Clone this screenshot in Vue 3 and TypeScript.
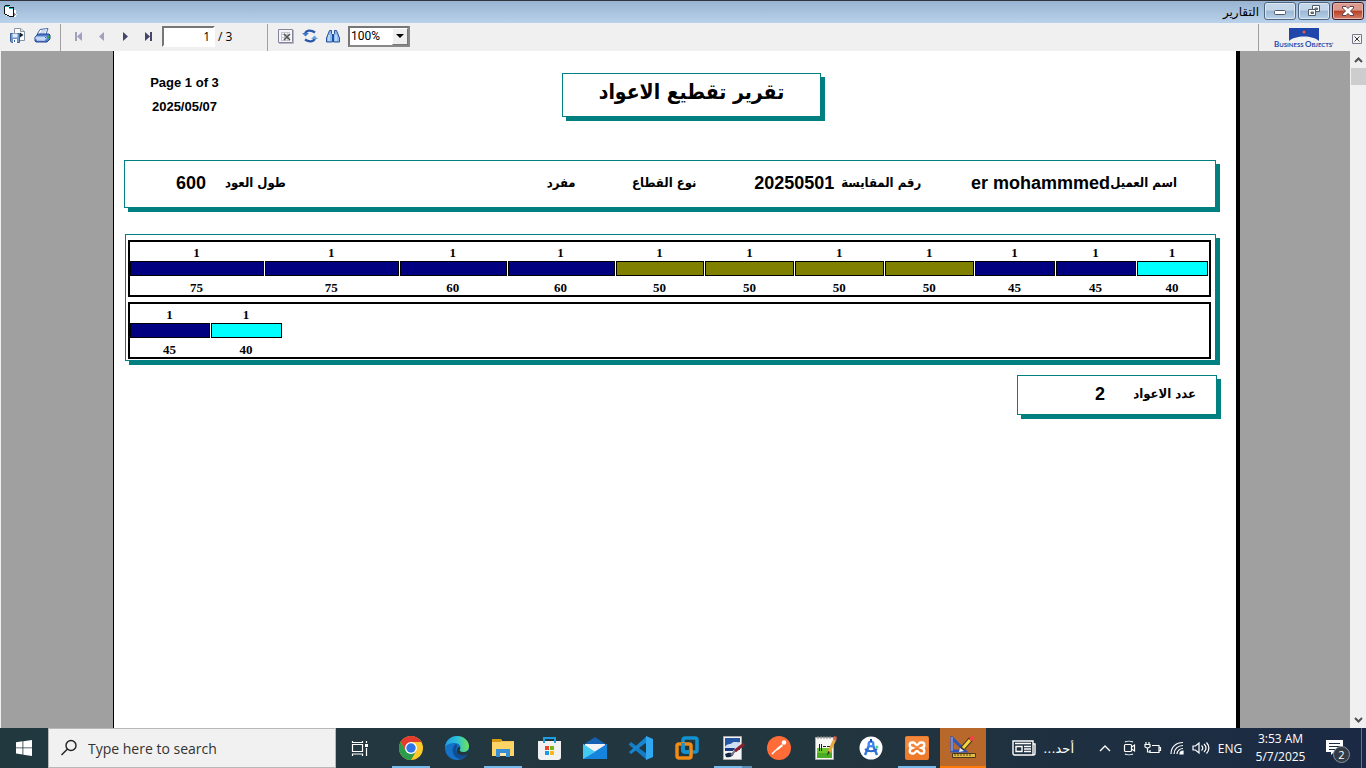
<script setup lang="ts">
import { ref } from 'vue'

type Tone = 'navy' | 'olive' | 'cyan'
interface Piece {
  count: number
  length: number
  tone: Tone
}

const barLength = 600
const page = ref('1')
const zoom = ref('100%')
const query = ref('')

const piece = (length: number, tone: Tone): Piece => ({ count: 1, length, tone })

const bars: Piece[][] = [
  [
    piece(75, 'navy'), piece(75, 'navy'), piece(60, 'navy'), piece(60, 'navy'),
    piece(50, 'olive'), piece(50, 'olive'), piece(50, 'olive'), piece(50, 'olive'),
    piece(45, 'navy'), piece(45, 'navy'), piece(40, 'cyan'),
  ],
  [piece(45, 'navy'), piece(40, 'cyan')],
]

const share = (p: Piece) => ({ width: `${(p.length / barLength) * 100}%` })
</script>

<template>
  <div class="screen">
    <header class="titlebar">
      <svg class="app-icon" width="14" height="14" viewBox="0 0 14 14" shape-rendering="crispEdges">
        <path d="M1 1h5v2h4v2h2v4h1v1h-1v2H7v-1H2V9H1z" fill="#fff" />
        <path d="M0 1h1v8H0zM1 0h5v1H1zM5 2h5v1H5zM9 3h1v8H9zM1 9h2v1H1zM3 10h2v1H3zM5 11h5v1H5z" fill="#111" />
        <path d="M1 1h4v1H1zM5 3h4v1H5z" fill="#20c0c0" />
        <path d="M10 8h1v1h1v1h-1v1h-1z" fill="#888" />
      </svg>
      <div class="title" dir="rtl">التقارير</div>
      <div class="window-buttons">
        <button class="wbtn" aria-label="Minimize">
          <svg width="14" height="12" viewBox="0 0 14 12"><rect x="1.500" y="5.500" width="11" height="4" rx="1" fill="#fff" stroke="#515a68" /></svg>
        </button>
        <button class="wbtn" aria-label="Restore">
          <svg width="14" height="12" viewBox="0 0 14 12" fill="none">
            <path d="M5.500.5h7v6h-7z" fill="#fff" stroke="#515a68" /><path d="M8 3h2.500v1.500H8z" fill="#88a8c8" stroke="#515a68" />
            <path d="M1.500 4.500h7v6h-7z" fill="#fff" stroke="#515a68" /><path d="M4 7h2.500v1.500H4z" fill="#88a8c8" stroke="#515a68" />
          </svg>
        </button>
        <button class="wbtn close" aria-label="Close">
          <svg width="14" height="12" viewBox="0 0 14 12">
            <path d="M1.500 1.500h3.500l2 2 2-2h3.500v1.500L9.500 6l3 3v1.500H9l-2-2-2 2H1.500V9l3-3-3-3z" fill="#fff" stroke="#5a4048" />
          </svg>
        </button>
      </div>
    </header>

    <nav class="toolbar" aria-label="Report toolbar">
      <div class="group files">
        <button class="tool" aria-label="Export">
          <svg width="18" height="18" viewBox="0 0 18 18">
            <path d="M5.500 1.500h6l4 3v9h-10z" fill="#fff" stroke="#8a93a0" />
            <path d="M11.500 1.500v3h4" fill="#dce4ec" stroke="#8a93a0" />
            <path d="M11 5.500l3.500 2.500-3.500 2.500z" fill="#123" /><path d="M6 8h5" stroke="#24527e" stroke-width="2" />
            <path d="M1.500 6.500h9v9H3l-1.500-1z" fill="#6f95cb" stroke="#3d639c" />
            <path d="M3.500 6.500h5v4h-5z" fill="#dfeafb" /><path d="M4 12h4v4H4z" fill="#fff" /><path d="M5 13h1v2H5z" fill="#345a94" />
          </svg>
        </button>
        <button class="tool" aria-label="Print">
          <svg width="18" height="16" viewBox="0 0 18 16">
            <path d="M6 1.500l8-1-2 6H3z" fill="#fff" stroke="#3f68b4" /><path d="M7 3h5M6 5h5" stroke="#9bb2d8" />
            <path d="M1 9l3-3h11l1 1v4l-3 3H2l-1-1z" fill="#4f7bd0" stroke="#27438e" />
            <path d="M1.500 8.500h11v3h-11z" fill="#c5d8f6" /><path d="M13 9l2-2v3l-2 2z" fill="#2bb04b" />
            <path d="M3 12h8" stroke="#fff" /><rect x="11" y="9" width="1" height="1" fill="#e22" />
          </svg>
        </button>
      </div>
      <div class="group pager">
        <button class="tool" aria-label="First page"><svg width="8" height="9" viewBox="0 0 8 9" fill="#a1a1bd"><path d="M0 0h2v9H0zM7 0v9L2 4.500z" /></svg></button>
        <button class="tool" aria-label="Previous page"><svg width="8" height="9" viewBox="0 0 8 9" fill="#a1a1bd"><path d="M6 0v9L1 4.500z" /></svg></button>
        <button class="tool" aria-label="Next page"><svg width="8" height="9" viewBox="0 0 8 9" fill="#46466a"><path d="M2 0v9l5-4.500z" /></svg></button>
        <button class="tool" aria-label="Last page"><svg width="8" height="9" viewBox="0 0 8 9" fill="#46466a"><path d="M6 0h2v9H6zM1 0v9l5-4.500z" /></svg></button>
        <input v-model="page" class="page-input" aria-label="Page number" type="text">
        <span class="page-total">/ 3</span>
      </div>
      <div class="group view">
        <button class="tool" aria-label="Close view">
          <svg width="16" height="15" viewBox="0 0 16 15">
            <path d="M.5.500h14v13H.500z" fill="#f6f6f8" stroke="#85859c" /><path d="M15.500 1v13.500H1" stroke="#b6b6c4" fill="none" />
            <path d="M3 3.500h9M3 5.500h9M3 8.500h9M3 11.500h9M3.500 3v9M6.500 3v9M9.500 3v9" stroke="#c4c4ce" />
            <path d="M6 5l6 6M12 5l-6 6" stroke="#555" stroke-width="1.600" />
          </svg>
        </button>
        <button class="tool" aria-label="Refresh">
          <svg width="16" height="14" viewBox="0 0 16 14">
            <path d="M3 5C4 1 9 .5 13 3.500" fill="none" stroke="#2b57ab" stroke-width="2.200" /><path d="M0 4h7L3.500 7.500z" fill="#3f78c8" />
            <path d="M13 9C12 13 7 13.500 3 10.500" fill="none" stroke="#2b57ab" stroke-width="2.200" /><path d="M16 10H9l3.500-3.500z" fill="#68a4dc" />
          </svg>
        </button>
        <button class="tool" aria-label="Find">
          <svg width="14" height="14" viewBox="0 0 14 14">
            <path d="M3.500 1.500h2v3l1 1v7.500h-6v-4z" fill="#8dbcf0" stroke="#23509c" /><path d="M8.500 1.500h2L13.500 9v4h-6V5.500l1-1z" fill="#8dbcf0" stroke="#23509c" />
            <path d="M3 6v6M10 6v6" stroke="#e4f2ff" /><path d="M6 5h2v3H6z" fill="#23509c" />
          </svg>
        </button>
        <div class="zoom">
          <select v-model="zoom" aria-label="Zoom">
            <option>100%</option>
          </select>
          <span class="zoom-arrow"><svg width="8" height="4" viewBox="0 0 8 4"><path d="M0 0h8L4 4z" /></svg></span>
        </div>
      </div>
      <div class="brand">
        <svg width="70" height="24" viewBox="0 0 70 24">
          <path d="M15 1h30v13C39 8 21 8 15 14z" fill="#2045ab" />
          <circle cx="30" cy="5" r="1.500" fill="#f05a3c" />
          <text x="0" y="20" class="brand-text"><tspan class="cap">B</tspan>USINESS <tspan class="cap">O</tspan>BJECTS’</text>
        </svg>
      </div>
      <button class="close-report" aria-label="Close report">
        <svg width="10" height="10" viewBox="0 0 10 10"><path d="M.5.500h9v9h-9z" fill="#f4f4f4" stroke="#77778c" /><path d="M2.500 2.500l5 5M7.500 2.500l-5 5" stroke="#333" /></svg>
      </button>
    </nav>

    <main class="viewer">
      <div class="canvas">
        <article class="paper">
          <div class="top">
            <div class="stamp">
              <div>Page 1 of 3</div>
              <div>2025/05/07</div>
            </div>
            <h1 class="box report-title" dir="rtl">تقرير تقطيع الاعواد</h1>
          </div>

          <section class="box info" dir="rtl">
            <span class="label">اسم العميل</span><span class="value" dir="ltr">er mohammmed</span>
            <span class="label">رقم المقايسة</span><span class="value">20250501</span>
            <span class="label">نوع القطاع</span><span class="label">مفرد</span>
            <span class="label">طول العود</span><span class="value">600</span>
          </section>

          <section class="box chart">
            <div v-for="(bar, i) in bars" :key="i" class="bar">
              <div v-for="(p, j) in bar" :key="j" class="piece" :style="share(p)">
                <span class="num">{{ p.count }}</span>
                <span class="fill" :class="p.tone"></span>
                <span class="num">{{ p.length }}</span>
              </div>
            </div>
          </section>

          <section class="box total" dir="rtl">
            <span class="label">عدد الاعواد</span><span class="value">2</span>
          </section>
        </article>
      </div>
      <div class="scrollbar">
        <button aria-label="Scroll up"><svg width="9" height="6" viewBox="0 0 9 6"><path d="M1 5l3.500-3.500L8 5" fill="none" stroke="#505050" stroke-width="2" /></svg></button>
        <div class="thumb"></div>
        <button class="down" aria-label="Scroll down"><svg width="9" height="6" viewBox="0 0 9 6"><path d="M1 1l3.500 3.500L8 1" fill="none" stroke="#505050" stroke-width="2" /></svg></button>
      </div>
    </main>

    <footer class="taskbar">
      <button class="start" aria-label="Start">
        <svg width="16" height="16" viewBox="0 0 16 16" fill="#fff"><path d="M0 2.200L6.500 1.300v6.200H0zM7.300 1.200L16 0v7.500H7.300zM0 8.300h6.500v6.200L0 13.600zM7.300 8.300H16V16l-8.700-1.200z" /></svg>
      </button>
      <label class="search">
        <svg width="18" height="18" viewBox="0 0 18 18" fill="none" stroke="#222" stroke-width="1.400"><circle cx="11" cy="6.500" r="5" /><path d="M7.500 10L1.500 16" /></svg>
        <input v-model="query" type="text" placeholder="Type here to search" aria-label="Search">
      </label>
      <button class="taskview" aria-label="Task view">
        <svg width="18" height="17" viewBox="0 0 18 17" fill="none" stroke="#fff" stroke-width="1.200"><path d="M1.500 4.500h10v7h-10zM1.500 1v1.500h10V1M1.500 16v-2h10v2M15.500 1v2M15.500 8v8" /><path d="M14 4h3v3h-3z" fill="#fff" stroke="none" /></svg>
      </button>
      <div class="apps">
        <button class="app running" aria-label="Chrome">
          <svg width="24" height="24" viewBox="0 0 24 24">
            <circle cx="12" cy="12" r="12" fill="#fdc829" /><path d="M1.600 6A12 12 0 0 1 22.400 6H12z" fill="#e33b2e" /><path d="M12 6H1.600l5.200 9z" fill="#e33b2e" />
            <path d="M1.600 6A12 12 0 0 0 12 24l5.200-9L12 18 6.800 15z" fill="#2a9c4a" />
            <circle cx="12" cy="12" r="6" fill="#fff" /><circle cx="12" cy="12" r="4.700" fill="#3176e8" />
          </svg>
        </button>
        <button class="app" aria-label="Edge">
          <svg width="24" height="24" viewBox="0 0 24 24">
            <defs><linearGradient id="edgeTop" x1="0" x2="1"><stop offset="0" stop-color="#219de5" /><stop offset=".5" stop-color="#2cc0d8" /><stop offset="1" stop-color="#70e354" /></linearGradient></defs>
            <circle cx="12" cy="12" r="12" fill="#1473c8" />
            <path d="M0 11C1 4 6 0 12 0c7 0 12 5 12 10 0 4-3 6-6 6-4 0-4-2-3-3 1-2 0-6-5-6C5 7 1 9 0 11z" fill="url(#edgeTop)" />
            <path d="M11 8c-5 3-5 14 5 15 3-1 5-3 6-5-8 3-13-3-10-7 0-1 1-2-1-3z" fill="#104d94" />
            <path d="M14.500 10.500c1 1 1 2 .5 2.500-1 2 1 3.500 4 3 2 0 3-.5 4.500-2l.5 2-2 2.500c-5 2-12 0-10-5.500.5-1 1-2 2.500-2.500z" fill="#22363f" />
          </svg>
        </button>
        <button class="app running" aria-label="File Explorer">
          <svg width="22" height="20" viewBox="0 0 22 20">
            <path d="M0 1h9l1 2h12v15H0z" fill="#fdd465" /><path d="M0 1h9v3H0z" fill="#d99a12" /><path d="M9 3h13v1H9z" fill="#f5c34a" />
            <path d="M4 11h14v8h-4v-4H8v4H4z" fill="#378fd6" /><path d="M8 15h6v3H8z" fill="#fde9a5" />
          </svg>
        </button>
        <button class="app" aria-label="Store">
          <svg width="24" height="24" viewBox="0 0 24 24">
            <path d="M7 6V2h11v4" fill="none" stroke="#1c9fe0" stroke-width="2" /><path d="M1 5h23v16a3 3 0 0 1-3 3H4a3 3 0 0 1-3-3z" fill="#f1f1f1" /><path d="M6 5h2v2H6zM17 5h2v2h-2z" fill="#1c9fe0" />
            <path d="M8 10h4v4H8z" fill="#e8472b" /><path d="M13 10h4v4h-4z" fill="#78b816" /><path d="M8 15h4v4H8z" fill="#189de4" /><path d="M13 15h4v4h-4z" fill="#fdb813" />
          </svg>
        </button>
        <button class="app" aria-label="Mail">
          <svg width="24" height="24" viewBox="0 0 24 24">
            <path d="M0 9L12 1l12 8v4H0z" fill="#1560b0" /><path d="M2 8h20v8H2z" fill="#f2f2f5" /><path d="M0 8l12 8 12-8v15H0z" fill="#2fb4ee" /><path d="M24 8L0 23h24z" fill="#1684dc" /><path d="M0 8l12 8L0 23z" fill="#43caf2" />
          </svg>
        </button>
        <button class="app" aria-label="Visual Studio Code">
          <svg width="24" height="24" viewBox="0 0 24 24">
            <path d="M0 8l2-2 16 12v6L0 9z" fill="#157cc4" /><path d="M0 16L18 0v6L2 18l-2-2z" fill="#1784cf" /><path d="M17 0v24l7-3V3z" fill="#30a8f0" />
          </svg>
        </button>
        <button class="app" aria-label="VMware">
          <svg width="24" height="24" viewBox="0 0 24 24" fill="none" stroke-width="3.500">
            <rect x="8" y="2" width="14" height="14" rx="2" stroke="#1292cf" /><rect x="2" y="8" width="14" height="14" rx="2" stroke="#f18b13" /><path d="M8 7v7a2 2 0 0 0 2 2h5" stroke="#1292cf" />
          </svg>
        </button>
        <button class="app running grouped" aria-label="Image editor">
          <svg width="24" height="24" viewBox="0 0 24 24">
            <path d="M2.500.5h18v23h-18z" fill="#f4f4f4" stroke="#aaa" /><path d="M4 2h15v12H4z" fill="#2456a4" /><path d="M4 11c2-4 5-2 7-4s5 0 8-1v6l-7 2H4z" fill="#cfe0f4" />
            <path d="M4 12h10l-2 3H4z" fill="#143a84" /><path d="M4 18c4-2 6-1 9-1-1 4-5 5-8 4z" fill="#132445" /><path d="M15 14l-5 5" stroke="#778" stroke-width="2" /><path d="M23 8l-9 7" stroke="#8c1f2c" stroke-width="3" />
          </svg>
        </button>
        <button class="app" aria-label="Postman">
          <svg width="24" height="24" viewBox="0 0 24 24">
            <circle cx="12" cy="12" r="12" fill="#ff6c37" /><circle cx="17" cy="6.500" r="2.300" fill="#fff" /><path d="M15 8l-5 4-2 3 3-1 5-4z" fill="#fff" /><path d="M9 14l-4 4" stroke="#fff" stroke-width="1.500" />
          </svg>
        </button>
        <button class="app" aria-label="Notepad++">
          <svg width="24" height="24" viewBox="0 0 24 24">
            <path d="M2.500 1.500h18v22h-18z" fill="#f7f8f4" stroke="#aaa" /><path d="M4 12h15v10H4z" fill="#6cc62c" /><path d="M4 17h15v5H4z" fill="#4bab22" />
            <path d="M6 8h1v7H6zM8 8h1v7H8zM10 10h3v1h-3zM14 10h3v1h-3z" fill="#222" /><path d="M22 3l-6 13" stroke="#e8a83c" stroke-width="3" /><path d="M21 0l3 1-1 4-3-2z" fill="#d4644e" /><path d="M15 15l2 1-3 4z" fill="#333" />
            <path d="M5 0v3M8 0v3M11 0v3M14 0v3M17 0v3" stroke="#888" />
          </svg>
        </button>
        <button class="app" aria-label="Android Studio">
          <svg width="24" height="24" viewBox="0 0 24 24">
            <circle cx="12" cy="12" r="11.500" fill="#fff" /><path d="M11 7L6 19M13 7l5 12" stroke="#3679dc" stroke-width="2.500" /><circle cx="12" cy="8" r="3.500" fill="#4285f4" /><circle cx="12" cy="8" r="1.200" fill="#fff" />
            <path d="M6 13c3 3 9 3 12 0" fill="none" stroke="#2a66ca" stroke-width="2" /><path d="M11 3h2v3h-2z" fill="#174ea6" /><circle cx="18" cy="11" r="1.500" fill="#3ddc84" />
          </svg>
        </button>
        <button class="app running" aria-label="XAMPP">
          <svg width="24" height="24" viewBox="0 0 24 24">
            <rect width="24" height="24" rx="2" fill="#ee7b2c" /><path d="M1 1h22v11H1z" fill="#f5924d" opacity=".6" />
            <path d="M7 6.500h1.500c2 0 1.500 2.500 3.500 2.500s1.500-2.500 3.500-2.500h1.500c3 0 3 4.500 0 5.500 3 1 3 5.500 0 5.500h-1.500c-2 0-1.500-2.500-3.500-2.500s-1.500 2.500-3.500 2.500H7c-3 0-3-4.500 0-5.500-3-1-3-5.500 0-5.500z" fill="none" stroke="#fff" stroke-width="2.400" />
          </svg>
        </button>
        <button class="app current" aria-label="Report viewer">
          <svg width="26" height="24" viewBox="0 0 26 24">
            <path d="M2 2v13h13z" fill="none" stroke="#3154b8" stroke-width="3" /><path d="M2 1v14" stroke="#aac4ff" /><path d="M2.500 17.500h23v4h-23z" fill="#e5ba43" stroke="#493b20" /><path d="M5 18v2M8 18v2M11 18v2M14 18v2M17 18v2M20 18v2" stroke="#53431b" />
            <path d="M21 3L12 13" stroke="#43351d" stroke-width="5" /><path d="M20 4L13 12" stroke="#f6d43f" stroke-width="3" /><circle cx="22" cy="2.500" r="2.500" fill="#e44" /><path d="M10 12l4 3-5 1z" fill="#eee" />
          </svg>
        </button>
      </div>

      <div class="tray">
        <button class="news">
          <svg width="24" height="16" viewBox="0 0 24 16" fill="none" stroke="#fff" stroke-width="1.400"><path d="M1 1h20v14H2.500A1.500 1.500 0 0 1 1 13.500zM21 4h2v9.500a1.500 1.500 0 0 1-2 1.500M3 3.500h16M4 6.500h6v5H4zM12 6.500h7M12 9h7M12 11.500h7" /></svg>
          <span dir="rtl">أحد...</span>
        </button>
        <button class="ti" aria-label="Hidden icons"><svg width="12" height="8" viewBox="0 0 12 8" fill="none" stroke="#fff" stroke-width="1.400"><path d="M1 7l5-5 5 5" /></svg></button>
        <button class="ti" aria-label="Meet now"><svg width="14" height="16" viewBox="0 0 14 16" fill="none" stroke="#fff" stroke-width="1.200"><rect x="2.500" y="4.500" width="7" height="7" rx="1" /><path d="M9.500 7l3-2v6l-3-2M3 2c2-1 6-1 8 0M3 14c2 1 6 1 8 0" /></svg></button>
        <button class="ti" aria-label="Battery"><svg width="18" height="14" viewBox="0 0 18 14" fill="none" stroke="#fff" stroke-width="1.200"><path d="M8 4.500h7v7H6V9M15 6.500h1.500v3H15M2 1v2M5 1v2M1 3.500h5V6L4 7H3L1 6zM3.500 7v4H6" /></svg></button>
        <button class="ti" aria-label="Wi-Fi"><svg width="14" height="14" viewBox="0 0 14 14" fill="none" stroke="#fff" stroke-width="1.200"><path d="M1 13C1 6 6 1.500 13 1.500M4 13c0-5 4-8.500 9-8.500M7 13c0-3 3-5.500 6-5.500" /><path d="M10 13a3 3 0 0 1 3-3v3z" fill="#fff" /></svg></button>
        <button class="ti" aria-label="Volume"><svg width="18" height="14" viewBox="0 0 18 14" fill="none" stroke="#fff" stroke-width="1.200"><path d="M1 5v4h2.500l3.500 3V2L3.500 5zM9.500 4.500c1.500 1.500 1.500 3.500 0 5M12 3c2.500 2.500 2.500 5.500 0 8M14.500 1.500c3 3.500 3 7.500 0 11" /></svg></button>
        <button class="lang">ENG</button>
        <button class="clock"><span>3:53 AM</span><span>5/7/2025</span></button>
        <button class="notify" aria-label="Notifications">
          <svg width="17" height="16" viewBox="0 0 17 16"><path d="M0 0h17v12H8l-3 3v-3H0z" fill="#fff" /><path d="M3 3.500h11M3 6.500h11M3 9.500h6" stroke="#1c2c42" /></svg>
          <span class="badge">2</span>
        </button>
        <div class="peek"></div>
      </div>
    </footer>
  </div>
</template>

<style>
body { margin: 0; overflow: hidden; }
</style>

<style scoped>
* { box-sizing: border-box; }
button { border: 0; padding: 0; background: none; color: inherit; font: inherit; display: flex; align-items: center; justify-content: center; }
svg { display: block; flex: none; }
.screen { height: 100vh; display: flex; flex-direction: column; background: #a0a0a0; font-family: "Liberation Sans", "DejaVu Sans", sans-serif; }

.titlebar { flex: none; height: 23px; display: flex; align-items: center; border-top: 1px solid #33343a; background: linear-gradient(#98b4d2, #b9d1ea); }
.app-icon { margin-left: 4px; }
.title { flex: 1; margin-right: 5px; font: 12px/20px "DejaVu Sans", sans-serif; color: #000; text-align: right; }
.window-buttons { display: flex; gap: 2px; padding-right: 2px; align-self: flex-start; }
.wbtn { width: 32px; height: 18px; margin-top: 1px; border: 1px solid #4f6580; border-radius: 3px; background: linear-gradient(#c3d5e8 45%, #9bb7d4 50%, #b9d1e8); box-shadow: inset 0 0 0 1px #dbe7f3; }
.wbtn.close { border-color: #431d28; background: linear-gradient(#dc9a8e 45%, #b83f26 50%, #d5806a); box-shadow: inset 0 0 0 1px #e4b5ac; }

.toolbar { flex: none; height: 28px; display: flex; align-items: stretch; background: #f0f0f0; }
.group { display: flex; align-items: center; border-right: 1px solid #a0a0a0; margin-top: 1px; padding-bottom: 3px; }
.files { width: 61px; padding-left: 9px; gap: 7px; }
.pager { width: 207px; padding-left: 10px; }
.pager .tool { width: 16px; margin-right: 7px; }
.page-input { width: 53px; height: 21px; margin-left: -1px; padding: 0 3px; border: 2px solid; border-color: #767676 #fff #fff #767676; background: #fff; color: #000; font: 12px "Open Sans", sans-serif; text-align: right; outline: 0; }
.page-total { margin-left: 3px; font: 12px "Open Sans", sans-serif; }
.view { flex: 1; padding-left: 10px; gap: 8px; }
.zoom { position: relative; width: 62px; height: 21px; }
.zoom select { appearance: none; width: 100%; height: 100%; padding: 0 1px; border: 2px solid; border-color: #767676 #888 #888 #767676; border-radius: 0; background: #fff; color: #000; font: 12px Roboto, sans-serif; }
.zoom-arrow { position: absolute; top: 2px; right: 2px; bottom: 2px; width: 16px; display: flex; align-items: center; justify-content: center; background: #f0f0f0; border: 1px solid; border-color: #fff #777 #777 #fff; pointer-events: none; }
.brand { width: 93px; padding: 4px 0 0 15px; }
.brand-text { font: bold 6px Lato, sans-serif; fill: #2a4bab; }
.brand-text .cap { font-size: 8px; }
.close-report { width: 14px; padding-top: 3px; justify-content: flex-start; }

.viewer { flex: 1; min-height: 0; display: flex; }
.canvas { flex: 1; padding: 0 110px 0 112px; border-left: 1px solid #f0f0f0; border-right: 1px solid #f0f0f0; display: flex; }
.paper { flex: 1; min-width: 0; border-left: 1px solid #000; border-right: 4px solid #000; background: #fff; color: #000; padding: 22px 19px 0 10px; }
.box { border: 1px solid #008080; background: #fff; box-shadow: 4px 4px 0 #008080; }
.top { display: grid; grid-template-columns: 438fr 259px 396fr; height: 87px; }
.stamp { width: 121px; text-align: center; font: bold 13px/24px "Liberation Sans", sans-serif; margin-top: -2px; }
.report-title { margin: 0; height: 44px; text-align: center; font: bold 21px/36px "DejaVu Sans Condensed", "DejaVu Sans", sans-serif; }
.label { font: bold 13px/24px "DejaVu Sans Condensed", "DejaVu Sans", sans-serif; white-space: nowrap; }
.value { font: bold 18px/24px "Liberation Sans", sans-serif; white-space: nowrap; }
.info { height: 48px; padding: 0 38px 2px 0; display: grid; align-items: center; justify-items: start; grid-template-columns: minmax(0, 67fr) minmax(0, 189fr) minmax(0, 87fr) minmax(0, 138fr) minmax(0, 121fr) minmax(0, 290fr) minmax(0, 80fr) minmax(0, 81fr); margin-right: 1px; }
.chart { margin: 26px 1px 0 1px; padding: 5px 4px 1px 2px; height: 127px; display: flex; flex-direction: column; gap: 5px; }
.bar { height: 57px; flex: none; border: 2px solid #000; display: flex; }
.piece { flex: none; display: flex; flex-direction: column; padding-top: 3px; }
.num { flex: none; margin-right: 2px; font: bold 13px/16px "Liberation Serif", serif; text-align: center; }
.fill { flex: none; height: 15px; margin-right: 1px; border: 1px solid #000; }
.fill + .num { margin-top: 4px; }
.navy { background: #000080; }
.olive { background: #808000; }
.cyan { background: #00ffff; }
.total { width: 200px; height: 40px; margin: 14px 0 0 auto; padding: 0 20px 2px 0; display: grid; grid-template-columns: 91px 1fr; align-items: center; }

.scrollbar { width: 15px; background: #f0f0f0; display: flex; flex-direction: column; }
.scrollbar button { height: 17px; }
.thumb { height: 17px; background: #cdcdcd; }
.scrollbar .down { margin-top: auto; }

.taskbar { flex: none; height: 40px; display: flex; background: linear-gradient(90deg, #22383f, #22363f 60%, #1e3040 78%, #1b2944); color: #fff; font-family: "Open Sans", sans-serif; }
.start { width: 48px; }
.search { width: 288px; display: flex; align-items: center; gap: 10px; padding-left: 11px; border: 1px solid #b8b8b8; background: #f1f1f1; }
.search input { flex: 1; min-width: 0; border: 0; padding: 0; background: none; outline: 0; font: 14px "Open Sans", sans-serif; color: #333; }
.search input::placeholder { color: #333; opacity: 1; }
.taskview { width: 51px; padding-right: 3px; }
.apps { display: flex; margin-left: 1px; }
.app { width: 46px; }
.running { background: linear-gradient(#76b9ed, #76b9ed) center bottom / 38px 2px no-repeat; }
.grouped { background: linear-gradient(90deg, #76b9ed 28px, #5a8cb4 28px) center bottom / 38px 2px no-repeat; }
.current { background: linear-gradient(#ff7a08, #ff7a08) center bottom / 100% 2px no-repeat #b9682c; }
.tray { margin-left: auto; display: flex; align-items: stretch; }
.news { gap: 7px; margin-right: 19px; font: 13px "DejaVu Sans", sans-serif; }
.ti { width: 24px; }
.lang { width: 34px; font-size: 12px; }
.clock { width: 67px; flex-direction: column; font-size: 12px; line-height: 18px; }
.notify { width: 47px; position: relative; padding-right: 6px; }
.badge { position: absolute; left: 19px; top: 18px; width: 17px; height: 17px; border-radius: 50%; border: 1px solid #8d939a; background: #333c46; font-size: 11px; line-height: 15px; text-align: center; }
.peek { width: 5px; border-left: 1px solid #67728a; }
</style>
